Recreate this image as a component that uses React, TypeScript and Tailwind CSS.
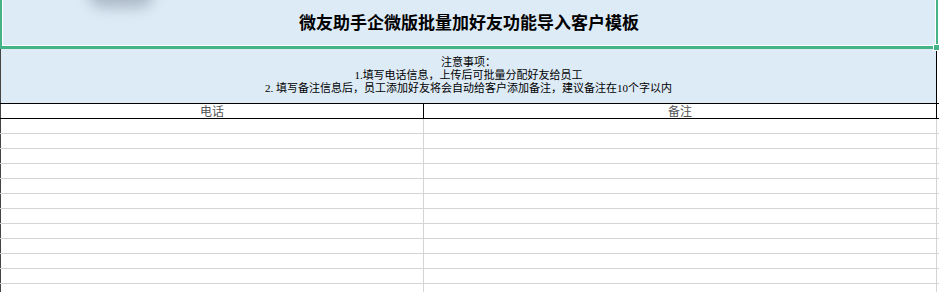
import React from 'react'

const rows = Array.from({ length: 12 })

export default function App() {
  return (
    <div
      className="relative w-[939px] h-[292px] overflow-hidden bg-white"
      style={{ fontFamily: '"Noto Sans CJK SC", "Noto Sans", sans-serif' }}
    >
      {/* title cell (selected) */}
      <div className="w-[938px] h-[49px] border-l-2 border-r-2 border-b-[3px] border-[#45b386]">
        <div className="h-full border-l border-r border-b border-white bg-[#ddebf7] flex items-center justify-center pb-[2px]">
          <span className="text-[17px] font-semibold text-black">
            微友助手企微版批量加好友功能导入客户模板
          </span>
        </div>
      </div>

      {/* notes */}
      <div
        className="w-[937px] h-[54px] border-l border-l-[#444] border-r border-r-black bg-[#ddebf7] flex flex-col items-center justify-center text-[11px] leading-[13px] text-black pb-[1px]"
        style={{ fontFamily: '"Liberation Serif", "Noto Sans CJK SC", serif' }}
      >
        <div>注意事项：</div>
        <div>1.填写电话信息，上传后可批量分配好友给员工</div>
        <div>2. 填写备注信息后，员工添加好友将会自动给客户添加备注，建议备注在10个字以内</div>
      </div>

      {/* header */}
      <div className="flex h-[16px] border-t border-b border-black">
        <div className="w-[424px] border-l border-l-[#444] border-r border-r-black flex items-center justify-center text-[12px] leading-[14px] text-[#555]">
          电话
        </div>
        <div className="w-[513px] border-r border-r-black flex items-center justify-center text-[12px] leading-[14px] text-[#555]">
          备注
        </div>
        <div className="flex-1 bg-white" />
      </div>

      {/* empty rows */}
      {rows.map((_, i) => (
        <div key={i} className="flex h-[15px] border-b border-[#d4d4d4]">
          <div className="w-[424px] border-l border-l-[#444] border-r border-r-[#d4d4d4]" />
          <div className="w-[513px] border-r border-r-[#d4d4d4]" />
          <div className="flex-1" />
        </div>
      ))}

      {/* fill handle */}
      <div className="absolute left-[933px] top-[44px] w-[7px] h-[7px] bg-[#45b386] border border-white" />

      {/* floating shadow at top */}
      <div className="absolute left-[88px] top-[-22px] w-[66px] h-[30px] rounded-full bg-[#8d99a6] opacity-60 blur-[7px]" />
    </div>
  )
}
